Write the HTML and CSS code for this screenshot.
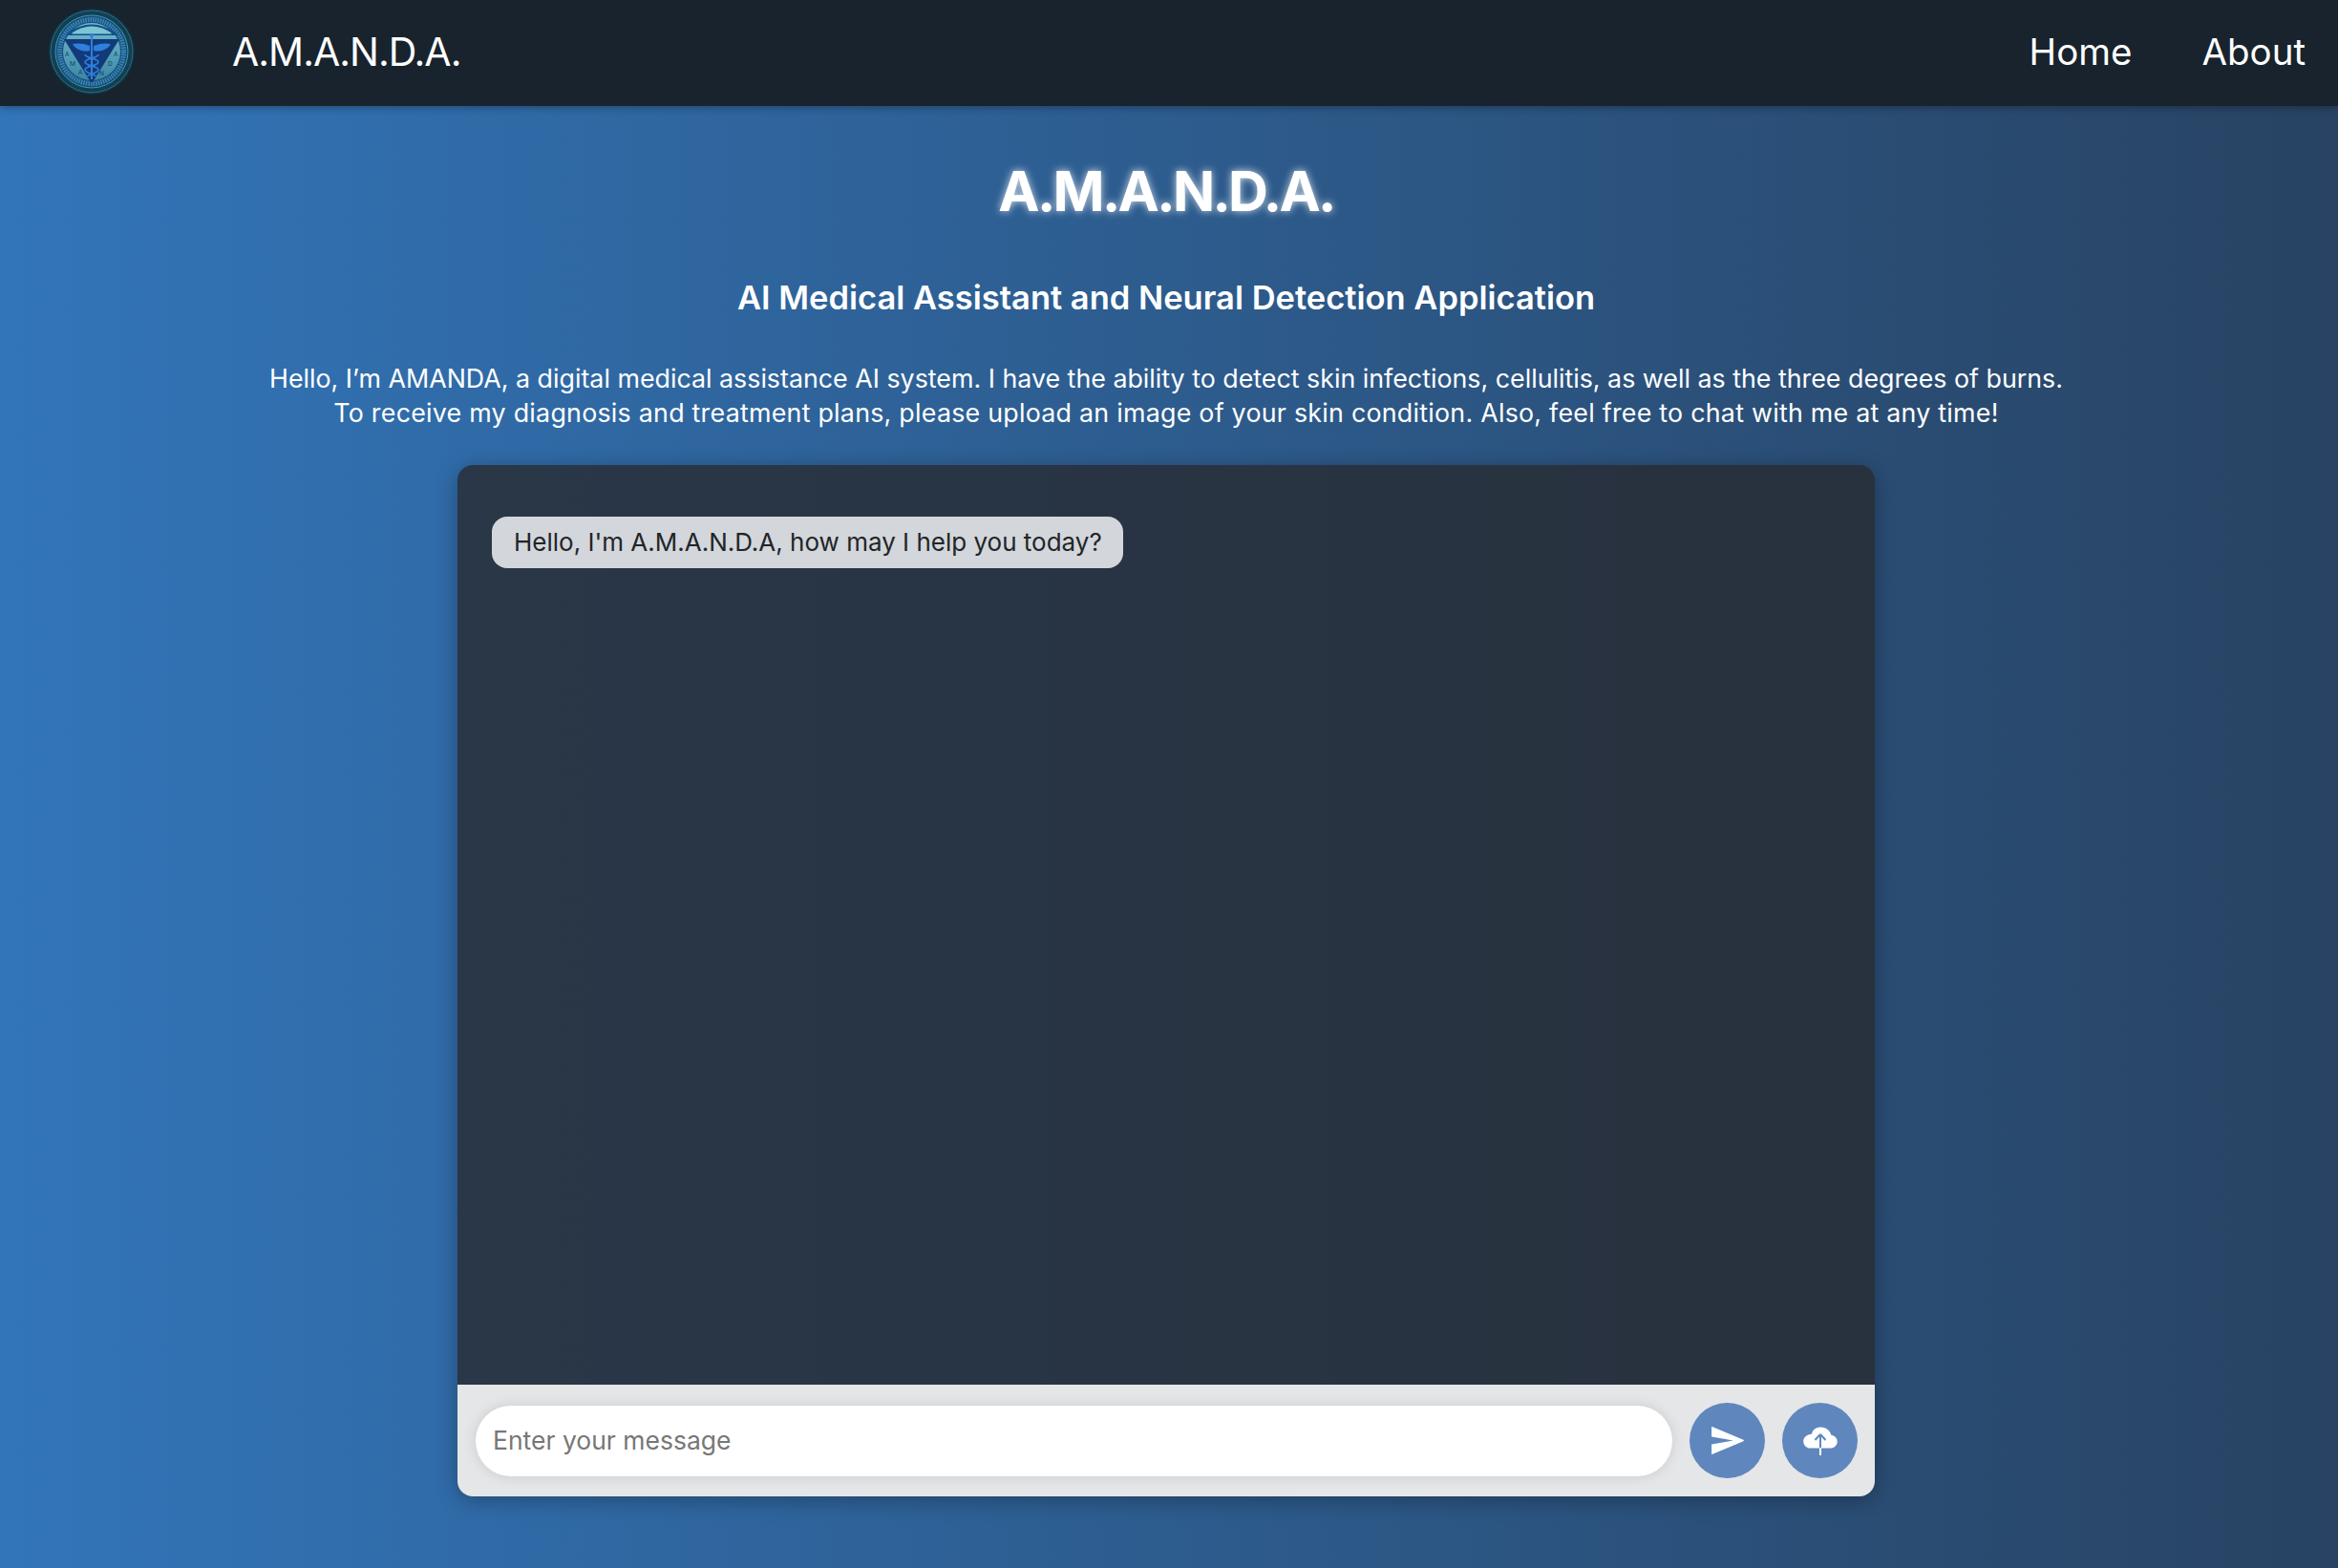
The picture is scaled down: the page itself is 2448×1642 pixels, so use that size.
FILE: index.html
```html
<!DOCTYPE html>
<html lang="en">
<head>
<meta charset="utf-8">
<title>A.M.A.N.D.A.</title>
<link rel="stylesheet" href="styles.css">
</head>
<body>
<nav class="nav">
  <div class="brand">
    <svg class="logo" viewBox="0 0 90 90" aria-hidden="true">
      <defs>
        <linearGradient id="tri" x1="0" y1="0" x2="0" y2="1">
          <stop offset="0" stop-color="#74bccd"/>
          <stop offset="1" stop-color="#3a87a6"/>
        </linearGradient>
      </defs>
      <circle cx="45" cy="45" r="45" fill="#12323f"/>
      <circle cx="45" cy="45" r="43" fill="#133f55" stroke="#27708a" stroke-width="1"/>
      <circle cx="45" cy="45" r="38" fill="#184f76" stroke="#3d98ad" stroke-width="1"/>
      <circle cx="45" cy="45" r="33.5" fill="none" stroke="#3a84b8" stroke-width="5" stroke-dasharray="1.6 1"/>
      <circle cx="45" cy="45" r="30" fill="url(#tri)"/>
      <path d="M16 32 H74 L46 77 H44 Z" fill="#123a78"/>
      <path d="M20 25 Q45 8 70 25 L72 28 H18 Z" fill="#12508a"/>
      <path d="M25 25 Q45 12 65 25 L66 26.5 H24 Z" fill="#7cc6d4"/>
      <g fill="#2f7fdc">
        <path d="M44 27 h2 v47 h-2 z"/>
        <circle cx="45" cy="28" r="2"/>
        <path d="M43 39 C36 36 30 36 25 37 C28 43 37 46 43 44 Z"/>
        <path d="M47 39 C54 36 60 36 65 37 C62 43 53 46 47 44 Z"/>
      </g>
      <path d="M38 48 C38 52 52 52 52 56 C52 60 38 60 38 64 C38 68 49 68 49 71 M52 48 C52 52 38 52 38 56 C38 60 52 60 52 64 C52 68 41 68 41 71" fill="none" stroke="#2f7fdc" stroke-width="1.7"/>
      <g class="logo-letters">
        <text x="17" y="50">A</text>
        <text x="22" y="60">M</text>
        <text x="31" y="69">A</text>
        <text x="53" y="70">N</text>
        <text x="62" y="60">D</text>
        <text x="68" y="50">A</text>
      </g>
    </svg>
    <span class="brand-name">A.M.A.N.D.A.</span>
  </div>
  <div class="links">
    <a class="link" href="#">Home</a>
    <a class="link" href="#">About</a>
  </div>
</nav>
<main class="main">
  <h1 class="title">A.M.A.N.D.A.</h1>
  <h2 class="subtitle">AI Medical Assistant and Neural Detection Application</h2>
  <p class="intro">Hello, I’m AMANDA, a digital medical assistance AI system. I have the ability to detect skin infections, cellulitis, as well as the three degrees of burns.<br><span class="intro-second">To receive my diagnosis and treatment plans, please upload an image of your skin condition. Also, feel free to chat with me at any time!</span></p>
  <section class="chat">
    <div class="messages">
      <div class="bubble">Hello, I'm A.M.A.N.D.A, how may I help you today?</div>
    </div>
    <form class="composer">
      <input class="field" type="text" placeholder="Enter your message">
      <button class="round" type="button" aria-label="Send">
        <svg class="send-icon" viewBox="0 0 24 24"><path d="M2.2 3.1c-.1 0 0 0 0 0L22.4 11.6c.4.2.4.6 0 .8L2.2 20.9c-.2.1-.3 0-.3-.3V14.4l14-2.4-14-2.4V3.4c0-.3.1-.4.3-.3z" fill="#fff"/></svg>
      </button>
      <button class="round" type="button" aria-label="Upload">
        <svg class="cloud-icon" viewBox="0 0 36 30"><path d="M18 0.5c-4.6 0-8.2 3-9.1 7.2C4 8.2.2 11 .2 15.2c0 4 3.2 7.3 7.3 7.3h21c3.9 0 7.2-2.9 7.2-6.8 0-3.6-2.8-6.5-6.4-6.9C28.2 4 23.7.5 18 .5z" fill="#fff"/><path d="M18 8 L12.5 14 M18 8 L23.5 14 M18 8 V22.5" stroke="#5f87bd" stroke-width="2" fill="none"/><path d="M18 22 V30" stroke="#fff" stroke-width="2"/></svg>
      </button>
    </form>
  </section>
</main>
</body>
</html>
```
FILE: styles.css
```css
* { box-sizing: border-box; }
html, body { margin: 0; height: 100%; }
body {
  min-height: 1642px;
  background: linear-gradient(90deg, #3275b9 0%, #284363 100%);
  font-family: Inter, "Open Sans", sans-serif;
  color: #fff;
  overflow: hidden;
}
.nav {
  height: 111px;
  background: #18232d;
  display: flex;
  align-items: center;
  justify-content: space-between;
  padding: 0 34px 3px 51px;
  box-shadow: 0 2px 8px rgba(0, 0, 0, .3);
}
.brand { display: flex; align-items: center; gap: 102px; }
.logo { width: 90px; height: 90px; display: block; }
.logo-letters { font-family: Inter, sans-serif; font-size: 6.5px; fill: #12405f; }
.brand-name { font-size: 41px; letter-spacing: -1px; line-height: 1; }
.links { display: flex; gap: 73px; }
.link { color: #fff; text-decoration: none; font-size: 38.5px; line-height: 1; }
.main {
  display: flex;
  flex-direction: column;
  align-items: center;
  padding: 56px 6px 0 0;
}
.title {
  margin: 0;
  font-size: 58px;
  line-height: 66px;
  font-weight: 700;
  letter-spacing: -2.7px;
  text-shadow: 0 0 8px rgba(255, 255, 255, .8);
}
.subtitle {
  margin: 59px 0 0;
  font-size: 34.5px;
  line-height: 40px;
  font-weight: 600;
}
.intro {
  margin: 46px 0 0;
  font-size: 26.8px;
  line-height: 36px;
  text-align: center;
}
.intro-second { letter-spacing: .25px; }
.chat {
  width: 1484px;
  height: 1080px;
  margin-top: 37px;
  border-radius: 16px;
  overflow: hidden;
  display: flex;
  flex-direction: column;
  background: rgba(39, 43, 49, .81);
  box-shadow: 0 4px 22px rgba(0, 0, 0, .3);
}
.messages {
  flex: 1;
  padding: 54px 36px;
  display: flex;
  align-items: flex-start;
}
.bubble {
  width: 661px;
  height: 54px;
  display: flex;
  align-items: center;
  padding: 0 23px 2px;
  background: #d3d6da;
  color: #212529;
  border-radius: 16px;
  font-size: 26px;
  white-space: nowrap;
}
.composer {
  height: 117px;
  flex: none;
  background: #e5e6e8;
  display: flex;
  align-items: center;
  gap: 18px;
  padding: 0 18px 0 19px;
}
.field {
  flex: 1;
  height: 74px;
  border: 0;
  outline: 0;
  border-radius: 37px;
  padding: 0 18px 2px;
  background: #fff;
  font: 26.5px Inter, sans-serif;
  color: #212529;
  box-shadow: 0 0 14px rgba(0, 0, 0, .12);
}
.field::placeholder { color: #777; opacity: 1; }
.round {
  width: 79px;
  height: 79px;
  flex: none;
  border: 0;
  padding: 0;
  border-radius: 50%;
  background: #5f87bd;
  display: flex;
  align-items: center;
  justify-content: center;
}
.send-icon { width: 39px; height: 39px; }
.cloud-icon { width: 36px; height: 30px; }
```
